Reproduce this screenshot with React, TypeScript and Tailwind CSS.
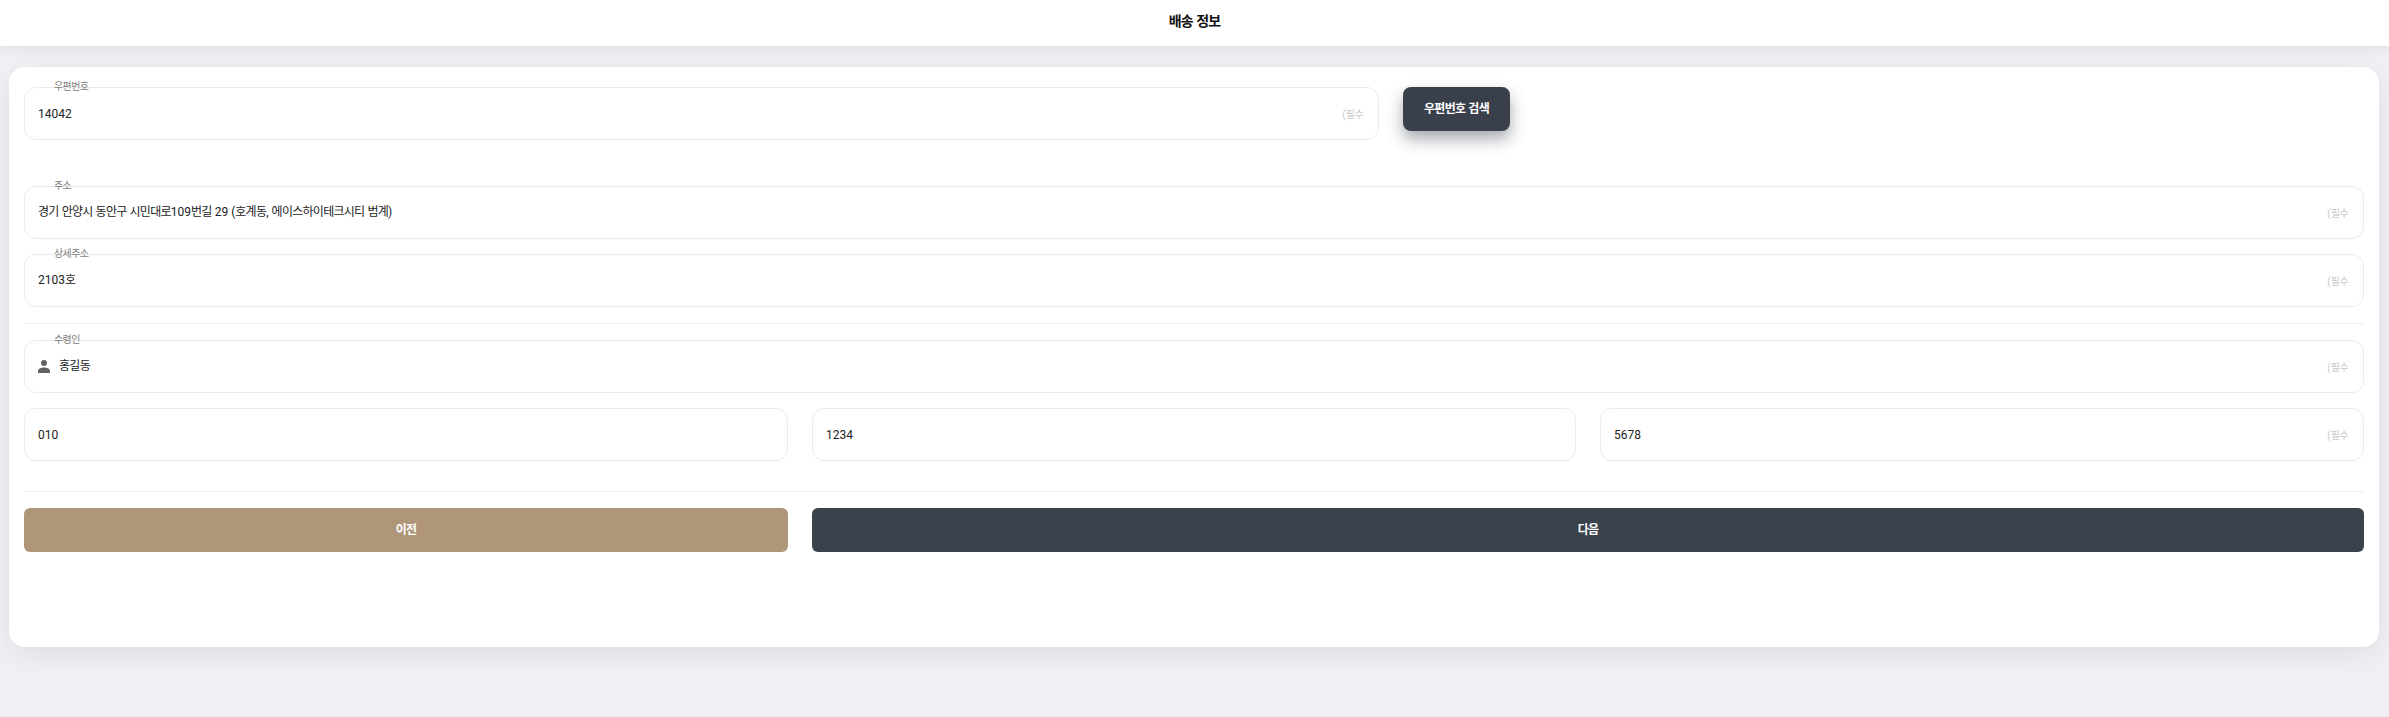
const font = "font-['Roboto','Noto_Sans_CJK_KR',sans-serif]";

// hangul in the reference runs narrower than Noto CJK, so tighten only those runs
function Ko({ text }: { text: string }) {
  return (
    <>
      {text.split(/([가-힣]+)/).map((part, i) =>
        /[가-힣]/.test(part) ? (
          <span key={i} className="tracking-[-0.06em]">
            {part}
          </span>
        ) : (
          part
        ),
      )}
    </>
  );
}

function Field({
  label,
  value,
  required,
  icon,
  className = "",
}: {
  label?: string;
  value: string;
  required?: boolean;
  icon?: boolean;
  className?: string;
}) {
  const lifted = /[가-힣]/.test(value);
  return (
    <div className={`relative flex h-[53px] items-center rounded-[12px] border border-[#ebebeb] bg-white px-[13px] ${className}`}>
      {label && (
        <span className="absolute left-[29px] top-[-7px] text-[10px] leading-[12px] text-[#808080]">
          <Ko text={label} />
        </span>
      )}
      {icon && <PersonIcon />}
      <span className={`flex-1 text-[12px] leading-[18px] text-[#222222] ${lifted ? "mb-[2px]" : ""}`}>
        <Ko text={value} />
      </span>
      {required && (
        <span className="mr-[2px] mt-[2px] text-[10px] leading-[14px] text-[#c9c9c9]">
          <Ko text="(필수" />
        </span>
      )}
    </div>
  );
}

function PersonIcon() {
  return (
    <svg viewBox="0 0 12 13" className="mr-[9px] h-[13px] w-[12px] fill-[#616161]">
      <circle cx="6" cy="3" r="3" />
      <path d="M0 13v-2.2C0 8.6 3.6 7.4 6 7.4s6 1.2 6 3.4V13z" />
    </svg>
  );
}

export default function App() {
  return (
    <div className={`min-h-[717px] bg-[#f0f0f5] ${font}`}>
      <header className="relative flex h-[46px] items-center justify-center bg-white pb-[4px] shadow-[0_2px_12px_rgba(0,0,0,0.09)]">
        <h1 className="text-[14px] font-bold text-[#111111]">
          <Ko text="배송 정보" />
        </h1>
      </header>
      <main className="ml-[9px] mr-[10px] mt-[21px] h-[580px] rounded-[16px] bg-white px-[15px] pt-[20px] shadow-[0_8px_32px_rgba(0,0,0,0.08)]">
        <div className="flex items-start gap-[24px]">
          <Field label="우편번호" value="14042" required className="w-[1355px]" />
          <button className="h-[44px] w-[107px] rounded-[8px] bg-[#3a404b] text-[12px] font-bold text-white shadow-[0_8px_16px_rgba(58,64,75,0.45)]">
            <Ko text="우편번호 검색" />
          </button>
        </div>
        <Field label="주소" value="경기 안양시 동안구 시민대로109번길 29 (호계동, 에이스하이테크시티 범계)" required className="mt-[46px]" />
        <Field label="상세주소" value="2103호" required className="mt-[15px]" />
        <div className="mt-[16px] border-t border-[#f0f0f0]" />
        <Field label="수령인" value="홍길동" required icon className="mt-[16px]" />
        <div className="mt-[15px] grid grid-cols-3 gap-[24px]">
          <Field value="010" />
          <Field value="1234" />
          <Field value="5678" required />
        </div>
        <div className="mt-[30px] border-t border-[#f0f0f0]" />
        <div className="mt-[16px] grid grid-cols-3 gap-[24px]">
          <button className="h-[44px] rounded-[6px] bg-[#b09679] text-[12px] font-bold text-white">
            <Ko text="이전" />
          </button>
          <button className="col-span-2 h-[44px] rounded-[6px] bg-[#3a424c] text-[12px] font-bold text-white">
            <Ko text="다음" />
          </button>
        </div>
      </main>
    </div>
  );
}
